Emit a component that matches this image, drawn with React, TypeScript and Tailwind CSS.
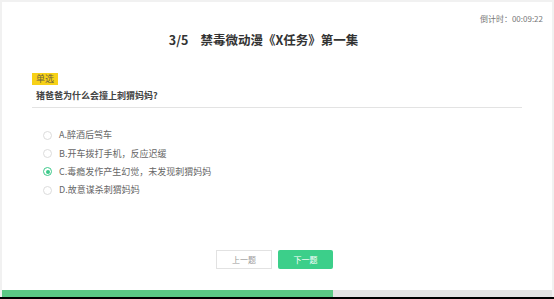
const options = [
  { key: "A", text: "醉酒后驾车" },
  { key: "B", text: "开车拨打手机，反应迟缓" },
  { key: "C", text: "毒瘾发作产生幻觉，未发现刺猬妈妈" },
  { key: "D", text: "故意谋杀刺猬妈妈" },
];

const font = { fontFamily: '"Noto Sans CJK SC", "Noto Sans", sans-serif' };

function Radio({ checked }: { readonly checked: boolean }): React.JSX.Element {
  return (
    <span
      className={`flex h-[9px] w-[9px] items-center justify-center rounded-full border ${checked ? "border-[#3cc98a]" : "border-[#dcdcdc]"} bg-white`}
    >
      {checked ? <span className="h-[4px] w-[4px] rounded-full bg-[#3cc98a]" /> : null}
    </span>
  );
}

export default function App(): React.JSX.Element {
  const current = 3;
  const total = 5;
  return (
    <div
      className="flex h-[299px] w-[554px] flex-col bg-[#f1f1f1] px-[2px] pt-[2px]"
      style={font}
    >
      <div className="flex flex-1 flex-col bg-white">
        <div className="flex justify-end pr-[9px] pt-[11px] text-[8px] leading-[12px] text-[#777]">
          倒计时：00:09:22
        </div>
        <h1 className="mt-[6px] pr-[27px] text-center text-[12.5px] font-bold leading-[18px] text-[#333]">
          <span className="mr-[12px]">
            {current}/{total}
          </span>
          禁毒微动漫《X任务》第一集
        </h1>
        <div className="flex flex-col items-start px-[30px]">
          <span className="mt-[24px] bg-[#f7d117] px-[4px] text-[9px] leading-[12px] text-[#6b6240]">
            单选
          </span>
          <div className="mt-[4px] w-full border-b border-[#e3e3e3] pb-[4px] pl-[4px] text-[9px] font-semibold leading-[14px] text-[#444]">
            猪爸爸为什么会撞上刺猬妈妈?
          </div>
          <ul className="mt-[18px] flex flex-col pl-[11px]">
            {options.map((o) => (
              <li
                key={o.key}
                className="flex h-[18.3px] items-center gap-[7px] text-[9px] text-[#666]"
              >
                <Radio checked={o.key === "C"} />
                <span>
                  {o.key}.{o.text}
                </span>
              </li>
            ))}
          </ul>
        </div>
        <div className="mt-[51px] flex justify-center gap-[6px] pr-[5px]">
          <button className="h-[19px] w-[56px] border border-[#e2e2e2] bg-white text-[8px] text-[#999]">
            上一题
          </button>
          <button className="h-[19px] w-[55px] rounded-[2px] bg-[#3ccf8a] text-[8px] text-white">
            下一题
          </button>
        </div>
        <div className="mt-auto h-[7px] w-full bg-[#e4e4e4]">
          <div
            className="h-full bg-[#5bc985]"
            style={{ width: `${(331 / 550) * 100}%` }}
          />
        </div>
      </div>
      <div className="-mx-[2px] h-[2px] bg-black" />
    </div>
  );
}
